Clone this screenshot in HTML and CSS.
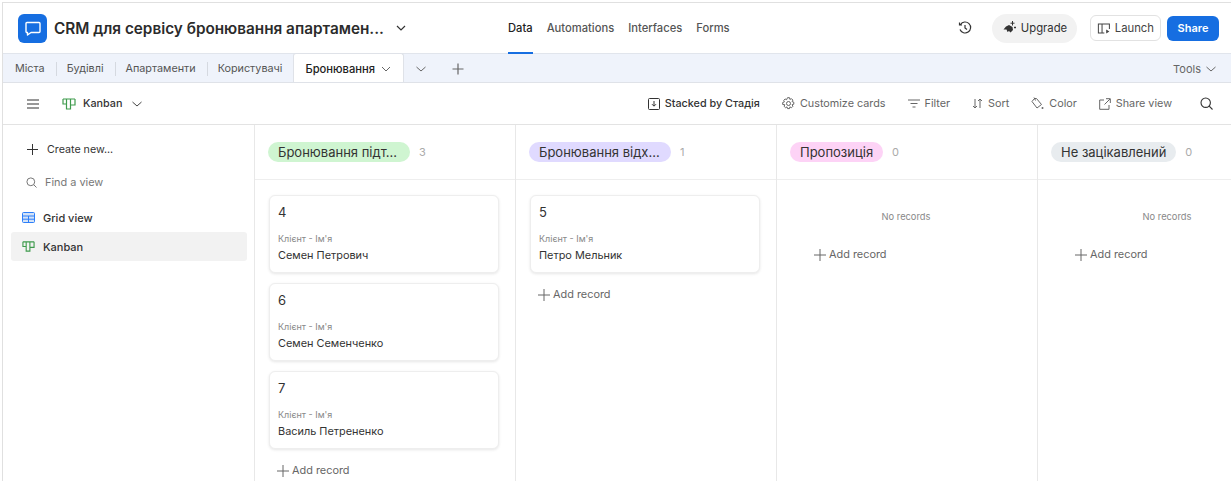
FILE: index.html
```html
<!DOCTYPE html>
<html lang="en">
<head>
    <meta charset="UTF-8">
    <meta name="viewport" content="width=device-width, initial-scale=1.0">
    <title>CRM Kanban</title>
    <link rel="stylesheet" href="styles.css">
</head>
<body>
<div class="app">
    <!-- Top header -->
    <header class="topbar">
        <div class="base-logo">
            <svg width="18" height="18" viewBox="0 0 18 18" fill="none" stroke="#fff" stroke-width="1.4"><path d="M3 3.5h12a1 1 0 0 1 1 1v8a1 1 0 0 1-1 1H7l-3.5 2.5v-2.5H3a1 1 0 0 1-1-1v-8a1 1 0 0 1 1-1z" stroke-linejoin="round"/></svg>
        </div>
        <div class="base-title">CRM для сервісу бронювання апартамен...</div>
        <svg class="title-chevron" width="12" height="12" viewBox="0 0 12 12" fill="none" stroke="#333" stroke-width="1.2"><path d="M2 4l4 4 4-4"/></svg>
        <nav class="top-nav">
            <a class="active">Data</a>
            <a>Automations</a>
            <a>Interfaces</a>
            <a>Forms</a>
        </nav>
        <div class="top-actions">
            <svg class="history" width="14" height="14" viewBox="0 0 14 14" fill="none" stroke="#333" stroke-width="1.2"><path d="M2.500 3.500A5.500 5.500 0 1 1 2 8.500M1.500 1.500v2.500h2.500M7 4v3l2 1.500"/></svg>
            <button class="upgrade">
                <svg width="15" height="15" viewBox="0 0 15 15" fill="#333"><path d="M1.500 8.500l2.500-3 3-1.500 3.500 2 .5 3-2.500 2.500-1.500-1.500-1.500 1-1-2.500z"/><path d="M10.500 0v4.500M8.500 2.200h4M13 5.500v2M12 6.500h2" stroke="#333" stroke-width="1" fill="none"/></svg>
                Upgrade
            </button>
            <button class="launch">
                <svg width="15" height="13" viewBox="0 0 15 13" fill="none" stroke="#444" stroke-width="1.1"><path d="M8 11.500H1.500v-10h12V7M5.500 1.500v10"/><path d="M10 7.500l3.500 2.200-3.500 2.300z" fill="#444" stroke="none"/></svg>
                Launch
            </button>
            <button class="share">Share</button>
        </div>
    </header>

    <!-- Table tabs -->
    <div class="tabbar">
        <a class="tab">Міста</a>
        <a class="tab">Будівлі</a>
        <a class="tab">Апартаменти</a>
        <a class="tab last">Користувачі</a>
        <a class="tab active">Бронювання
            <svg width="12" height="12" viewBox="0 0 12 12" fill="none" stroke="#666" stroke-width="1"><path d="M2 4l4 4 4-4"/></svg>
        </a>
        <svg class="tab-more" width="12" height="12" viewBox="0 0 12 12" fill="none" stroke="#666" stroke-width="1"><path d="M1.500 4l4.500 4 4.500-4"/></svg>
        <svg class="tab-add" width="12" height="12" viewBox="0 0 12 12" fill="none" stroke="#666" stroke-width="1.2"><path d="M6 .5v11M.5 6h11"/></svg>
        <span class="tools">Tools
            <svg width="12" height="12" viewBox="0 0 12 12" fill="none" stroke="#666" stroke-width="1"><path d="M1.500 4l4.500 4 4.500-4"/></svg>
        </span>
    </div>

    <!-- View toolbar -->
    <div class="toolbar">
        <svg class="burger" width="12" height="10" viewBox="0 0 12 10" stroke="#333" stroke-width="1.2"><path d="M0 1h12M0 5h12M0 9h12"/></svg>
        <svg class="kanban-icon" width="14" height="14" viewBox="0 0 14 14" fill="none" stroke="#3f9b4d" stroke-width="1.2"><path d="M1 2h12M1 2v5h3.500M4.500 2v10h4V2M8.500 8H13V2"/></svg>
        <span class="view-name">Kanban</span>
        <svg class="view-chevron" width="12" height="12" viewBox="0 0 12 12" fill="none" stroke="#444" stroke-width="1"><path d="M1.500 4l4.500 4 4.500-4"/></svg>
        <div class="tool-items">
            <span class="tool dark">
                <svg width="12" height="12" viewBox="0 0 12 12" fill="none" stroke="#333" stroke-width="1"><rect x=".5" y=".5" width="11" height="11" rx="1"/><path d="M6 3v5M4 6.200l2 2 2-2"/></svg>
                Stacked by Стадія
            </span>
            <span class="tool">
                <svg width="13" height="13" viewBox="0 0 13 13" fill="none" stroke="#666" stroke-width="1"><circle cx="6.500" cy="6.500" r="2"/><path d="M5.500 .7h2l.4 1.700 1.600-.7 1.400 1.400-.8 1.500 1.700.6v2l-1.700.5.8 1.600-1.400 1.400-1.600-.8-.4 1.700h-2l-.5-1.700-1.500.8-1.400-1.400.7-1.600L.7 7.500v-2l1.700-.6-.7-1.500 1.400-1.400 1.500.7z"/></svg>
                Customize cards
            </span>
            <span class="tool">
                <svg width="12" height="9" viewBox="0 0 12 9" stroke="#666" stroke-width="1"><path d="M0 1h12M2.500 4.500h7M4.500 8h3"/></svg>
                Filter
            </span>
            <span class="tool">
                <svg width="11" height="11" viewBox="0 0 11 11" fill="none" stroke="#666" stroke-width="1"><path d="M3 1v9M1 8l2 2 2-2M8 10V1M6 3l2-2 2 2"/></svg>
                Sort
            </span>
            <span class="tool">
                <svg width="13" height="13" viewBox="0 0 13 13" fill="none" stroke="#666" stroke-width="1"><path d="M3.500 1.500l-2.500 3 5 6.500 4.500-3.500-5-6zM3 .5l1.500 3"/><circle cx="11.500" cy="11" r="1" fill="#666" stroke="none"/></svg>
                Color
            </span>
            <span class="tool">
                <svg width="12" height="12" viewBox="0 0 12 12" fill="none" stroke="#666" stroke-width="1"><path d="M5 2H.7v9.300H10V7M7 .7h4.300V5M11 1L5.500 6.500"/></svg>
                Share view
            </span>
            <svg class="search" width="13" height="13" viewBox="0 0 13 13" fill="none" stroke="#333" stroke-width="1.1"><circle cx="5.700" cy="5.700" r="4.700"/><path d="M9.200 9.200l3.300 3.300"/></svg>
        </div>
    </div>

    <div class="main">
        <!-- Views sidebar -->
        <aside class="sidebar">
            <div class="side-create">
                <svg width="11" height="11" viewBox="0 0 11 11" stroke="#333" stroke-width="1"><path d="M5.500 0v11M0 5.500h11"/></svg>
                Create new...
            </div>
            <div class="side-find">
                <svg width="11" height="11" viewBox="0 0 11 11" fill="none" stroke="#777" stroke-width="1"><circle cx="4.800" cy="4.800" r="3.900"/><path d="M7.700 7.700l2.800 2.800"/></svg>
                Find a view
            </div>
            <div class="side-item">
                <svg width="13" height="11" viewBox="0 0 13 11" fill="#d4e3f7" stroke="#2d7ff9" stroke-width="1"><rect x=".5" y=".5" width="12" height="10" rx="1"/><path d="M.5 4h12M.5 7.200h12M6.500 4v6.500" fill="none"/></svg>
                Grid view
            </div>
            <div class="side-item selected">
                <svg width="13" height="13" viewBox="0 0 14 14" fill="none" stroke="#3f9b4d" stroke-width="1.2"><path d="M1 2h12M1 2v5h3.500M4.500 2v10h4V2M8.500 8H13V2"/></svg>
                Kanban
            </div>
        </aside>

        <!-- Kanban board -->
        <section class="board">
            <div class="column">
                <div class="col-head"><span class="pill wide green">Бронювання підт...</span><span class="count">3</span></div>
                <div class="col-body">
                    <div class="card">
                        <div class="card-title">4</div>
                        <div class="card-label">Клієнт - Ім'я</div>
                        <div class="card-value">Семен Петрович</div>
                    </div>
                    <div class="card">
                        <div class="card-title">6</div>
                        <div class="card-label">Клієнт - Ім'я</div>
                        <div class="card-value">Семен Семенченко</div>
                    </div>
                    <div class="card">
                        <div class="card-title">7</div>
                        <div class="card-label">Клієнт - Ім'я</div>
                        <div class="card-value">Василь Петрененко</div>
                    </div>
                    <div class="add-record">
                        <svg width="12" height="12" viewBox="0 0 12 12" stroke="#666" stroke-width="1"><path d="M6 0v12M0 6h12"/></svg>
                        Add record
                    </div>
                </div>
            </div>
            <div class="column">
                <div class="col-head"><span class="pill wide purple">Бронювання відх...</span><span class="count">1</span></div>
                <div class="col-body">
                    <div class="card">
                        <div class="card-title">5</div>
                        <div class="card-label">Клієнт - Ім'я</div>
                        <div class="card-value">Петро Мельник</div>
                    </div>
                    <div class="add-record">
                        <svg width="12" height="12" viewBox="0 0 12 12" stroke="#666" stroke-width="1"><path d="M6 0v12M0 6h12"/></svg>
                        Add record
                    </div>
                </div>
            </div>
            <div class="column">
                <div class="col-head"><span class="pill pink">Пропозиція</span><span class="count">0</span></div>
                <div class="col-body empty">
                    <div class="no-records">No records</div>
                    <div class="add-record">
                        <svg width="12" height="12" viewBox="0 0 12 12" stroke="#666" stroke-width="1"><path d="M6 0v12M0 6h12"/></svg>
                        Add record
                    </div>
                </div>
            </div>
            <div class="column">
                <div class="col-head"><span class="pill gray">Не зацікавлений</span><span class="count">0</span></div>
                <div class="col-body empty">
                    <div class="no-records">No records</div>
                    <div class="add-record">
                        <svg width="12" height="12" viewBox="0 0 12 12" stroke="#666" stroke-width="1"><path d="M6 0v12M0 6h12"/></svg>
                        Add record
                    </div>
                </div>
            </div>
        </section>
    </div>
</div>
</body>
</html>
```

FILE: styles.css
```css
* {
    box-sizing: border-box;
}

html, body {
    margin: 0;
    height: 100%;
    overflow: hidden;
}

body {
    font-family: Inter, "Noto Sans", sans-serif;
    font-size: 12px;
    color: #333;
    background-color: #fff;
}

.app {
    height: 481px;
    margin-top: 2px;
    margin-left: 2px;
    border-top: 1px solid #e0e0e0;
    border-left: 1px solid #e0e0e0;
    display: flex;
    flex-direction: column;
    overflow: hidden;
}

/* Top header */
.topbar {
    height: 51px;
    flex: none;
    display: flex;
    align-items: center;
    padding-left: 15px;
    border-bottom: 1px solid #e1e5ec;
}

.base-logo {
    width: 29px;
    height: 29px;
    border-radius: 6px;
    background-color: #166ee1;
    display: flex;
    align-items: center;
    justify-content: center;
}

.base-title {
    margin-left: 7px;
    width: 333px;
    font-size: 15.3px;
    font-weight: 600;
    color: #2b2b2b;
    white-space: nowrap;
}

.title-chevron {
    margin-left: 8px;
}

.top-nav {
    margin-left: 101px;
    display: flex;
    gap: 14px;
    align-self: stretch;
    margin-bottom: -1px;
}

.top-nav a {
    display: flex;
    align-items: center;
    font-size: 11.2px;
    color: #555;
    font-weight: 500;
    border-bottom: 2px solid transparent;
}

.top-nav a.active {
    color: #222;
    border-bottom-color: #166ee1;
}

.top-actions {
    margin-left: auto;
    padding-right: 12px;
    display: flex;
    align-items: center;
}

.top-actions button {
    font-family: inherit;
    font-size: 11.3px;
    display: flex;
    align-items: center;
    justify-content: center;
    gap: 4px;
    cursor: pointer;
}

.history {
    margin-right: 20px;
}

.upgrade {
    width: 85px;
    height: 29px;
    border: none;
    border-radius: 15px;
    background-color: #f2f2f2;
    color: #333;
}

.launch {
    margin-left: 13px;
    width: 71px;
    height: 26px;
    border: 1px solid #e2e2e2;
    border-radius: 6px;
    background-color: #fff;
    color: #444;
}

.top-actions .share {
    margin-left: 6px;
    width: 52px;
    height: 25px;
    border: none;
    border-radius: 6px;
    background-color: #166ee1;
    color: #fff;
    font-size: 11px;
    font-weight: 600;
}

/* Table tabs */
.tabbar {
    height: 29px;
    flex: none;
    display: flex;
    align-items: center;
    background-color: #eff3fb;
    border-bottom: 1px solid #dfe2e8;
    padding: 2px 0 0 12px;
}

.tab {
    font-size: 10.8px;
    color: #555;
    padding-right: 11px;
    margin-right: 10px;
    line-height: 14px;
    border-right: 1px solid #d5d9e0;
}

.tab.last {
    border-right: none;
    margin-right: 0;
}

.tab.active {
    align-self: stretch;
    height: 29px;
    width: 111px;
    margin-right: 0;
    padding: 1px 0 0 11px;
    margin-top: -3px;
    display: flex;
    align-items: center;
    gap: 5px;
    font-size: 11.2px;
    border: 1px solid #dfe2e8;
    border-bottom: none;
    border-radius: 3px 3px 0 0;
    background-color: #fff;
    color: #222;
    font-weight: 500;
}

.tab-more {
    margin-left: 11px;
}

.tab-add {
    margin-left: 25px;
}

.tools {
    margin-left: auto;
    padding-right: 14px;
    display: flex;
    align-items: center;
    gap: 4px;
    color: #666;
    font-size: 11px;
}

/* View toolbar */
.toolbar {
    height: 42px;
    flex: none;
    display: flex;
    align-items: center;
    padding-left: 24px;
    border-bottom: 1px solid #e3e3e3;
}

.kanban-icon {
    margin-left: 23px;
}

.view-name {
    margin-left: 7px;
    font-weight: 500;
    font-size: 10.8px;
}

.view-chevron {
    margin-left: 9px;
}

.tool-items {
    margin-left: auto;
    padding-right: 18px;
    display: flex;
    align-items: center;
    gap: 22px;
}

.tool {
    display: flex;
    align-items: center;
    gap: 5px;
    color: #666;
    font-size: 10.8px;
    white-space: nowrap;
}

.tool.dark {
    color: #333;
    font-weight: 500;
}

.search {
    margin-left: 6px;
}

/* Views sidebar */
.main {
    flex: 1;
    display: flex;
    min-height: 0;
}

.sidebar {
    width: 251px;
    flex: none;
    padding: 0 7px 0 8px;
}

.side-create {
    display: flex;
    align-items: center;
    gap: 9px;
    margin-top: 17px;
    padding-left: 16px;
    height: 14px;
    font-size: 10.7px;
}

.side-find {
    display: flex;
    align-items: center;
    gap: 8px;
    margin-top: 19px;
    padding-left: 15px;
    height: 14px;
    font-size: 10.9px;
    color: #777;
}

.side-item {
    display: flex;
    align-items: center;
    gap: 8px;
    height: 29px;
    padding-left: 11px;
    font-weight: 500;
    font-size: 11px;
    border-radius: 3px;
}

.sidebar .side-find + .side-item {
    margin-top: 14px;
}

.side-item.selected {
    background-color: #f2f2f2;
}

/* Kanban board */
.board {
    flex: 1;
    display: flex;
    min-width: 0;
}

.column {
    width: 261px;
    flex: none;
    border-left: 1px solid #e8e8e8;
}

.col-head {
    height: 55px;
    display: flex;
    align-items: center;
    padding-left: 13px;
    border-bottom: 1px solid #eee;
}

.pill {
    height: 20px;
    line-height: 20px;
    padding: 0 10px;
    border-radius: 10px;
    font-size: 13px;
    color: #333;
    white-space: nowrap;
}

.pill.wide {
    width: 142px;
}

.green {
    background-color: #cff5d1;
}

.purple {
    background-color: #e0daff;
}

.pink {
    background-color: #fdd3f6;
}

.gray {
    background-color: #e8ecef;
}

.count {
    margin-left: 9px;
    color: #aaa;
    font-size: 11px;
}

.col-body {
    padding: 15px 16px 0 14px;
}

.card {
    height: 78px;
    margin-bottom: 10px;
    padding: 8px 8px 0 8px;
    border: 1px solid #eee;
    border-radius: 6px;
    background-color: #fff;
    box-shadow: 0 1px 3px rgba(0, 0, 0, .1);
}

.card-title {
    font-size: 13px;
    line-height: 16px;
    color: #333;
}

.card-label {
    margin-top: 13px;
    font-size: 9px;
    line-height: 11px;
    color: #888;
}

.card-value {
    margin-top: 4px;
    font-size: 10.9px;
    line-height: 15px;
    color: #333;
}

.add-record {
    display: flex;
    align-items: center;
    gap: 3px;
    margin-top: 14px;
    padding-left: 8px;
    font-size: 10.9px;
    color: #666;
    line-height: 15px;
}

.col-body.empty {
    padding-top: 30px;
}

.no-records {
    text-align: center;
    font-size: 9.3px;
    line-height: 13px;
    color: #888;
}

.empty .add-record {
    margin-top: 24px;
    padding-left: 23px;
}
```
